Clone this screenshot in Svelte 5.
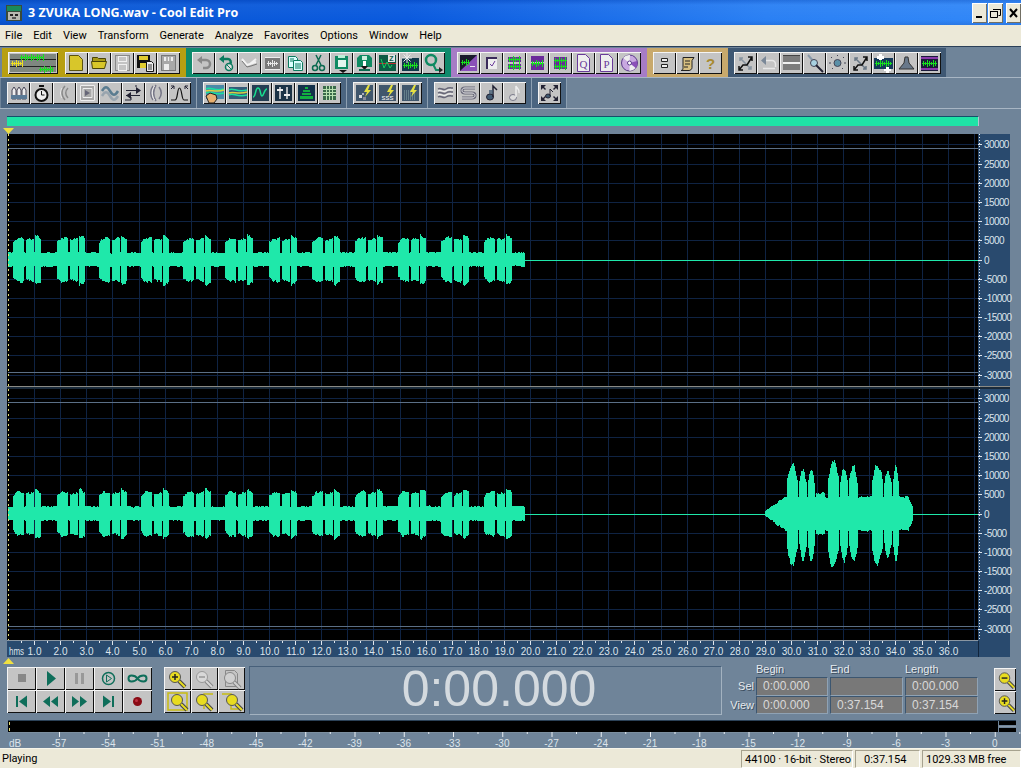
<script>
  // small seeded rng so the waveform is the same on every load
  function rng(seed) {
    let a = seed;
    return () => {
      a = (a + 0x6d2b79f5) | 0;
      let t = Math.imul(a ^ (a >>> 15), 1 | a);
      t = (t + Math.imul(t ^ (t >>> 7), 61 | t)) ^ t;
      return ((t ^ (t >>> 14)) >>> 0) / 4294967296;
    };
  }

  const burstStarts = [13, 57, 99, 141, 183, 225, 269, 312, 355, 398, 441, 484];

  function shortEnv(x) {
    if (x > 524) return 0;
    let amp = 6.5;
    for (const s of burstStarts) {
      const r = x - s;
      if (r >= 0 && r <= 10) amp = 17 + Math.min(r, 4) * 1;
      if (r >= 13 && r <= 20) amp = 19 + (r - 13) * 0.25;
      if (r >= 22 && r <= 27) amp = 24 - (r - 22) * 0.6;
    }
    return amp;
  }

  const longLobes = [
    [787, 797, 49], [799, 806, 43], [808, 814, 46],
    [828, 838, 51], [840, 847, 46], [849, 857, 46],
    [872, 882, 49], [884, 891, 42], [893, 898, 46],
  ];

  function longEnv(x) {
    if (x < 765 || x > 912) return 0;
    let amp = 16;
    if (x < 785) amp = 2 + ((x - 765) / 20) * 14;
    if (x >= 816 && x <= 824) amp = 20;
    if (x > 908) amp = 15 - (x - 908) * 2.2;
    for (const [a, b, h] of longLobes) {
      if (x >= a && x <= b) {
        const t = (x - a) / (b - a);
        amp = h * (0.7 + 0.3 * Math.sin(t * Math.PI));
      }
    }
    return amp;
  }

  // one 1px column per x, whole pixels; the jitter is smoothed so lobes stay solid
  function wavePath(cy, seed, withLong) {
    const r = rng(seed);
    const spans = [[8, 524, shortEnv]];
    if (withLong) spans.push([765, 912, longEnv]);
    let d = '';
    let upper = 0.5;
    let lower = 0.5;
    for (const [from, to, env] of spans) {
      for (let x = from; x <= to; x++) {
        const e = env(x);
        const big = e > 12;
        upper = upper * 0.45 + r() * 0.55;
        lower = lower * 0.45 + r() * 0.55;
        const spread = big ? 0.2 : 0.4;
        const top = Math.round(cy - e * (1 - spread / 2 + upper * spread));
        const bot = Math.round(cy + e * (1 - spread / 2 + lower * spread) * (big ? 1.04 : 1));
        d += `M${x} ${top}h1V${bot + 1}h-1Z`;
      }
    }
    return d;
  }

  const wave1 = wavePath(258, 11, false);
  const wave2 = wavePath(512, 29, true);

  const STEP = 19.17;
  const vLines = Array.from({ length: 37 }, (_, i) => Math.round(8 + 26.1 * (i + 1)) + 0.5);
  const levels = [-6, -5, -4, -3, -2, -1, 0, 1, 2, 3, 4, 5, 6];
  const channels = [259, 513];
  const lvlY = (cy, k) => Math.round(cy + k * STEP - 0.5) + 0.5;

  const seconds = Array.from({ length: 36 }, (_, i) => i + 1);
  const dbMarks = Array.from({ length: 20 }, (_, i) => -57 + i * 3);

  // --- icon bits ---
  const wv = (x, y, w, c) => {
    let s = `<path d="M${x} ${y}.5h${w}" stroke="${c}"/>`;
    for (let i = 1; i < w; i += 2) {
      const h = 1 + ((i * 7) % 3);
      s += `<path d="M${x + i}.5 ${y - h}v${2 * h + 1}" stroke="${c}"/>`;
    }
    return s;
  };
  const box = (x, y, w, h, c) => `<rect x="${x}" y="${y}" width="${w}" height="${h}" fill="${c}"/>`;
  const line = (d, c, sw = 1) => `<path d="${d}" fill="none" stroke="${c}" stroke-width="${sw}"/>`;
  const cross = (a, b) =>
    line('M6 6L17 17M6 9V6h3M14 17h3v-3', b, 1.5) + line('M5 18L9 13l4 0 5-8M14 5h4v4M5 14v4h4', a, 1.5);
  const bolt = `<path d="M15 3L11 10h3l-2 5 6-7h-3l2-5z" fill="#e6e040"/>`;
  const stripes = (c1) =>
    box(5, 5, 13, 5, c1) + box(5, 12, 13, 5, c1) + wv(5, 7, 13, '#18e020') + wv(5, 14, 13, '#18e020');
  const pageMark = (l) =>
    `<path d="M5.500 2.500h8l4 4v13h-12z" fill="#eee" stroke="#6a3a9a"/><text x="11.500" y="16" font-size="11" font-family="Liberation Serif" text-anchor="middle" fill="#6a3a9a">${l}</text>`;
  const mag = (inner = '', cx = 11, cy = 10, c = '#e8dc20') =>
    `<path d="M${cx + 4} ${cy + 4}l6 6" stroke="#444" stroke-width="4"/><path d="M${cx + 4} ${cy + 4}l6 6" stroke="${c}" stroke-width="2"/><circle cx="${cx}" cy="${cy}" r="5.500" fill="${c}" stroke="#555"/>${inner}`;

  const icons = {
    new: `<path d="M4.500 3.500h9l4 4v11h-13z" fill="#d8c62a" stroke="#5a5210"/>`,
    open: `<path d="M4.500 5.500h5l1 1h7v3h-13z" fill="#a89a18" stroke="#4a4408"/><path d="M3.500 9.500h15l-2 7h-12z" fill="#d8c62a" stroke="#4a4408"/>`,
    save: `<rect x="4.500" y="3.500" width="14" height="15" fill="none" stroke="#888"/>` + `<rect x="7.500" y="4.500" width="8" height="5" fill="none" stroke="#f0f0f0"/>` + `<rect x="7.500" y="12.500" width="8" height="6" fill="none" stroke="#f0f0f0"/>`,
    saveas: box(3, 3, 13, 13, '#111') + box(5, 4, 9, 4, '#e0cc30') + box(6, 11, 6, 5, '#e0cc30') + `<path d="M12.500 9.500h5l2 2v8h-7z" fill="#eee" stroke="#111"/>` + line('M14 13h4M14 15h4M14 17h4', '#333'),
    saveall: `<rect x="4.500" y="3.500" width="14" height="15" fill="#a8a8a8" stroke="#777"/>` + box(7, 5, 9, 4, '#eee') + line('M10 5v4M13 5v4', '#777') + box(7, 12, 5, 6, '#eee'),
    undo: line('M7 8h7a3.500 3.500 0 0 1 0 8h-3', '#888', 2.500) + `<path d="M10 4l-5 4 5 4z" fill="#888"/>`,
    repeat: line('M7 7h6a3 3 0 0 1 2 5', '#0b7a5e', 2.500) + `<path d="M9 3L4 7l5 4z" fill="#0b7a5e"/><circle cx="14" cy="15" r="3.500" fill="#ddd" stroke="#0b7a5e" stroke-width="1.500"/>` + line('M12 13l5 5', '#0b7a5e'),
    env: line('M4 7l5 6 3-1 6-5M12 12l6-2', '#f2f2f2', 2) + line('M4 9l5 6 4-1 6-2', '#777', 1),
    trim: box(4, 5, 15, 13, '#7a7a7a') + wv(6, 11, 11, '#e8e8e8') + line('M4 5.500h15M4 17.500h15', '#eee'),
    copy: `<path d="M4.500 4.500h7l2 2v9h-9z" fill="#dff" stroke="#0b7a5e"/><path d="M9.500 8.500h7l2 2v8h-9z" fill="#dff" stroke="#0b7a5e"/>` + line('M6 7h4M6 9h3M11 12h6M11 14h6M11 16h6', '#0b7a5e'),
    cut: line('M9 3l5 10M14 3L9 13', '#0b6a50', 1.500) + `<circle cx="8" cy="16" r="2.500" fill="none" stroke="#0b6a50" stroke-width="1.500"/><circle cx="15" cy="16" r="2.500" fill="none" stroke="#0b6a50" stroke-width="1.500"/>`,
    paste: box(5, 4, 13, 13, '#0f8a62') + box(8, 3, 7, 3, '#bff0d8') + box(8, 8, 8, 7, '#e4f6ee') + `<path d="M9 18l4 3 4-3z" fill="#111"/>`,
    pastemix: `<path d="M7 3h9l3 3v9H4V6z" fill="#0f8a62"/>` + box(9, 4, 5, 4, '#cfeee0') + box(10, 9, 3, 6, '#fff') + `<path d="M8 14h7l-3.500 4z" fill="#111"/>` + box(6, 17, 11, 2, '#0b6a50'),
    snap: box(3, 3, 17, 16, '#0d5a44') + line('M3 11.500h17', '#c03030') + line('M5 7l3 9 3-6 3 6 2-3', '#18d060') + box(12, 3, 7, 7, '#e4e4e4') + `<text x="15.500" y="9" font-size="7" text-anchor="middle" font-family="Liberation Sans" font-weight="700" fill="#0d5a44">Z</text>`,
    spark: box(3, 6, 17, 13, '#12384a') + wv(4, 13, 15, '#18e020') + line('M8 1v10M3 6h10M4.500 2.500l7 7M11.500 2.500l-7 7', '#eee'),
    zoomq: `<circle cx="9" cy="8" r="5" fill="none" stroke="#0f8a62" stroke-width="2.500"/>` + line('M11 12l3 6h5', '#0f8a62', 2) + `<path d="M17 15l4 3-4 3z" fill="#222"/>`,
    morph: box(3, 3, 17, 16, '#1a1a2a') + `<path d="M20 3v16H3z" fill="#8a50b8"/>` + wv(4, 10, 9, '#18e020') + box(13, 14, 5, 1, '#e8e0f0'),
    check: box(6, 5, 11, 12, '#eee') + box(6, 5, 11, 2, '#3a2a5a') + box(6, 5, 2, 12, '#3a2a5a') + line('M10 12l2 2 3-5', '#6a3a9a'),
    s1: stripes('#6a2a9a'),
    s2: box(5, 4, 13, 6, '#6a2a9a') + box(5, 12, 13, 6, '#6a2a9a') + wv(5, 11, 13, '#18e020'),
    s3: box(5, 5, 13, 12, '#6a2a9a') + wv(5, 8, 13, '#18e020') + wv(5, 14, 13, '#18e020'),
    docq: pageMark('Q'),
    docp: pageMark('P'),
    cd: `<circle cx="11.500" cy="11" r="8" fill="#c8a8e0" stroke="#5a3a8a"/><path d="M11.500 11L5 6a8 8 0 0 1 7-3zM11.500 11l6 5a8 8 0 0 1-6 3z" fill="#eee"/><path d="M11.500 11L19 9a8 8 0 0 1-1 7z" fill="#8a50b8"/><circle cx="11.500" cy="11" r="2" fill="#fff" stroke="#5a3a8a"/>`,
    ff: `<path d="M8.500 6.500h6v3h-6zM8.500 12.500h6v3h-6z" fill="#eee" stroke="#222"/>`,
    scroll: `<path d="M7 5.500h11l-2 3v7c0 2-2 3-3 3H5c2 0 2-2 2-3z" fill="#d8c080" stroke="#222"/>` + line('M9 9h5M9 12h5M8 15h4', '#222'),
    help: `<text x="11.500" y="17" font-size="15" font-weight="700" font-family="Liberation Sans" text-anchor="middle" fill="#a88a30">?</text>`,
    x1: cross('#111', '#8894a0'),
    back: line('M6 8.500h9a3.500 3.500 0 0 1 3.500 3.500v3', '#e8e8e8', 1.500) + line('M6 16.500h12', '#e8e8e8', 1.500) + `<path d="M9 4l-5 4.500 5 4.500z" fill="#7a8898"/>`,
    hbar: box(3, 4, 17, 14, '#7c7c7c') + box(3, 10, 17, 2, '#f0f0f0') + box(3, 3, 17, 1, '#444'),
    plug: line('M5 3l6 7', '#8899aa', 2) + `<circle cx="11" cy="11" r="3.500" fill="#a8d0e0" stroke="#445"/>` + line('M13 13l7 7', '#223', 2),
    ball: `<circle cx="11.500" cy="11" r="3.500" fill="#5a90a8" stroke="#445"/>` + `<path d="M11.500 3v1M5 5l1 1M18 5l-1 1M3 11h2M18 11h2M6 17l1-1M17 17l-1-1" stroke="#445"/>`,
    x2: cross('#111', '#6a7886'),
    waveplus: box(2, 6, 19, 11, '#173a5a') + wv(3, 11, 17, '#18e020') + `<path d="M7 2h3v2h2v3h-2v1H7V7H5V4h2zM14 15h3v2h2v2h-2v2h-3v-2h-2v-2h2z" fill="#fff"/>`,
    cone: `<path d="M10 5h3l1 6 5 6H4l5-6z" fill="#68788a" stroke="#333"/>`,
    band: box(3, 4, 17, 15, '#1a1a3a') + box(3, 5, 17, 2, '#8a3aaa') + box(3, 16, 17, 2, '#8a3aaa') + wv(4, 11, 15, '#18e020'),
    tubes: `<path d="M5 8l2-3 2 3v9H5zM10 8l2-3 2 3v9h-4zM15 8l2-3 2 3v9h-4z" fill="#eee" stroke="#445"/>` + box(4, 13, 16, 4, '#5a7a96'),
    watch: `<circle cx="11.500" cy="13" r="6" fill="#eee" stroke="#111" stroke-width="2"/>` + box(9, 3, 5, 2, '#111') + line('M11.500 9v4h3', '#111'),
    arcs: line('M12 4c-4 4-4 10 0 14M15 6c-3 3-3 7 0 10', '#8a8a8a', 1.500) + line('M9 6c-2 3-2 7 0 10', '#e8e8e8', 1),
    spiral: `<rect x="4" y="3" width="15" height="16" fill="#a8a8a8"/>` + line('M4.500 3.500h14v15h-14zM7 6.500h9v9H7z', '#eee') + `<path d="M9 8l5 3-5 3z" fill="#667"/>`,
    wavy: line('M3 9c3-5 5-5 8 0s5 5 8 0', '#5a7c90', 2.500) + line('M3 14c3-5 5-5 8 0s5 5 8 0', '#98a4ae', 2.500),
    arrows: line('M4 8.500h14M4 13.500h14', '#223') + `<path d="M14 5l5 3.500-5 3.500zM9 10l-5 3.500 5 3.500z" fill="#223"/>` + line('M3 18h6v-3M14 5V3', '#223'),
    arcs2: line('M8 4c-3 4-3 10 0 14M11 3c-3 5-3 11 0 16M14 5c3 4 3 8 0 12', '#778', 1.500) + line('M9.500 4c-3 4-3 10 0 14', '#f0f0f0'),
    peak: line('M3 18h4c3 0 2-12 4.500-12s2 12 4.500 12h4', '#111', 1.200) + line('M3 7l3-3M3 4h3v3M20 7l-3-3M20 4h-3v3', '#223'),
    wavehand: box(3, 3, 18, 14, '#4a8aa8') + line('M3 7c4-3 8 3 18 0M3 11c4-3 8 3 18 0', '#18e0a0', 1.500) + line('M3 9c4-2 10 2 18-1', '#d8d040', 1.500) + `<path d="M3 14l4-3 6 2 1 4-3 4H6z" fill="#e8b070" stroke="#222"/>`,
    waves: box(3, 5, 18, 12, '#355a78') + line('M3 8c4-3 8 3 18 0M3 13c4-3 8 3 18 0', '#18e0a0', 1.500) + line('M3 11c4-2 10 2 18-1', '#d8d040', 1.500),
    curve: box(3, 3, 17, 16, '#253d52') + line('M4 15c3 0 2-9 5-9s2 8 4 8 2-7 5-7', '#18e090', 1.500),
    sliders: box(3, 3, 17, 16, '#1c3346') + line('M8 5v12M15 5v12', '#e4e4e4', 1.500) + box(5, 7, 6, 2, '#eee') + box(12, 12, 6, 2, '#eee'),
    spec: box(3, 3, 17, 16, '#12304a') + `<path d="M10 5h3v2h-3zM8 8h7v2H8zM7 11h9v2H7zM5 14h13v3H5z" fill="#12b040"/>`,
    grid: box(5, 4, 13, 14, '#3a6a4a') + line('M5 7.500h13M5 10.500h13M5 13.500h13M8.500 4v14M11.500 4v14M14.500 4v14', '#b8e0b0'),
    zap1: box(3, 3, 17, 16, '#40566c') + box(6, 13, 3, 3, '#ddd') + box(10, 15, 3, 3, '#889') + box(9, 11, 2, 2, '#aab') + bolt,
    zap2: box(3, 3, 17, 16, '#40566c') + `<text x="11.500" y="18" font-size="8" font-family="Liberation Sans" text-anchor="middle" fill="#eee">sss</text>` + bolt,
    zap3: box(3, 3, 17, 16, '#40566c') + `<path d="M5 9h12M5 11h12M5 13h12M5 15h12M5 17h12" stroke="#8aa" stroke-dasharray="1 1"/>` + bolt,
    ripple: line('M4 7c3-2 5 2 8 0s5-1 7-1M4 11c3-2 5 2 8 0s5-1 7-1M4 15c3-2 5 2 8 0s5-1 7-1', '#667', 1.500) + line('M4 9c3-2 5 2 8 0s5-1 7-1M4 13c3-2 5 2 8 0s5-1 7-1', '#f4f4f4'),
    ess: line('M18 6H8c-4 0-4 5 0 5h7c4 0 4 5 0 5H5', '#667', 3) + line('M18 6H8c-4 0-4 5 0 5h7c4 0 4 5 0 5H5', '#eee', 1),
    note: `<ellipse cx="10" cy="15" rx="3.500" ry="3" fill="#405a72" stroke="#223"/>` + line('M13 15V4l4 4', '#223', 1.500) + line('M9 9h4M9 11h4', '#405a72', 1.500),
    noteo: `<ellipse cx="10" cy="15.500" rx="3.500" ry="3" fill="#ddd" stroke="#778"/>` + line('M13 15V4c1 3 4 3 3 7', '#eee', 1.500),
    corners: `<ellipse cx="10" cy="14" rx="2.500" ry="2" fill="#405a72" stroke="#223"/>` + line('M12 14V7l3 3', '#223') + `<path d="M3 3h5l-2 2 2 2-1 1-2-2-2 2zM20 3h-5l2 2-2 2 1 1 2-2 2 2zM3 19h5l-2-2 2-2-1-1-2 2-2-2zM20 19h-5l2-2-2-2 1-1 2 2 2-2z" fill="#223"/>`,
  };

  const toolbar1 = [
    { cls: 'gold', big: true, items: ['new', 'open', 'save', 'saveas', 'saveall'] },
    { cls: 'teal', items: ['undo', 'repeat', 'env', 'trim', 'copy', 'cut', 'paste', 'pastemix', 'snap', 'spark', 'zoomq'] },
    { cls: 'purple', items: ['morph', 'check', 's1', 's2', 's3', 'docq', 'docp', 'cd'] },
    { cls: 'tan', items: ['ff', 'scroll', 'help'] },
    { cls: 'slate', items: ['x1', 'back', 'hbar', 'plug', 'ball', 'x2', 'waveplus', 'cone', 'band'] },
  ];
  const toolbar2 = [
    ['tubes', 'watch', 'arcs', 'spiral', 'wavy', 'arrows', 'arcs2', 'peak'],
    ['wavehand', 'waves', 'curve', 'sliders', 'spec', 'grid'],
    ['zap1', 'zap2', 'zap3'],
    ['ripple', 'ess', 'note', 'noteo'],
    ['corners'],
  ];

  const T = '#0f6e5a';
  const transport = [
    box(11, 7, 8, 8, '#888'),
    `<path d="M11 4l9 7.500-9 7.500z" fill="${T}"/>`,
    box(10, 6, 3, 11, '#999') + box(16, 6, 3, 11, '#999'),
    `<circle cx="14.500" cy="11.500" r="6" fill="none" stroke="${T}" stroke-width="1.500"/><path d="M12.500 8l5 3.500-5 3.500z" fill="none" stroke="${T}"/>`,
    line('M14.500 11.500c-2-3-4-3-6-3s-3 1.500-3 3 1 3 3 3 4 0 6-3 4-3 6-3 3 1.500 3 3-1 3-3 3-4 0-6-3', T, 2),
    box(9, 6, 2, 11, T) + `<path d="M20 5.500v12l-8-6z" fill="${T}"/>`,
    `<path d="M14 6v11l-7-5.500zM22 6v11l-7-5.500z" fill="${T}"/>`,
    `<path d="M7 6v11l7-5.500zM15 6v11l7-5.500z" fill="${T}"/>`,
    box(18, 6, 2, 11, T) + `<path d="M9 5.500v12l8-6z" fill="${T}"/>`,
    `<circle cx="14.500" cy="11.500" r="4.500" fill="#8a0a14"/><circle cx="13.500" cy="10.500" r="1.500" fill="#c03040"/>`,
  ];

  const plus = line('M8 10h6M11 7v6', '#222', 1.500);
  const minus = line('M8 10h6', '#222', 1.500);
  const zoomBtns = [
    mag(plus),
    mag(line('M8 10h6', '#999', 1.500), 11, 10, '#d8d8d8').replace(/#555/g, '#999').replace(/#444/g, '#888'),
    `<path d="M7.500 3.500h9l3 3v13h-12z" fill="none" stroke="#888"/>` + mag('', 12, 11, '#d0d0d0').replace(/#555/g, '#888').replace(/#444/g, '#888'),
    `<rect x="4" y="3" width="19" height="17" fill="none" stroke="#c8bc10" stroke-width="1.500"/>` + mag('', 13, 10),
    line('M22 4H13v15', '#c8bc10', 1.500) + mag('', 11, 10),
    line('M4 4h9v15h8', '#c8bc10', 1.500) + mag('', 14, 10),
  ];

  const menu = ['File', 'Edit', 'View', 'Transform', 'Generate', 'Analyze', 'Favorites', 'Options', 'Window', 'Help'];
  const lvl = (k) => (k === 0 ? '0' : String(k * -5000));
</script>

<div class="app">
  <header class="titlebar">
    <svg class="appicon" width="16" height="16" viewBox="0 0 16 16">
      <rect width="16" height="16" fill="#3a4a3a" />
      <rect x="1" y="1" width="14" height="5" fill="#1a8a5a" />
      <rect x="2" y="7" width="12" height="8" fill="#b8b8b0" />
      <rect x="4" y="9" width="3" height="2" fill="#222" />
      <rect x="9" y="9" width="3" height="2" fill="#222" />
      <rect x="6" y="12" width="4" height="2" fill="#555" />
    </svg>
    <span class="title">3 ZVUKA LONG.wav - Cool Edit Pro</span>
    <div class="winbtns">
      <div class="winbtn"><svg width="13" height="12"><rect x="3" y="9" width="6" height="2" fill="#000" /></svg></div>
      <div class="winbtn"><svg width="13" height="12"><path d="M4.500 2.500h7v6h-2M1.500 4.500h7v6h-7z" fill="none" stroke="#000" /><path d="M4 2.500h8M1 4.500h8" stroke="#000" /></svg></div>
      <div class="winbtn close"><svg width="13" height="12"><path d="M3 2l7 8M10 2l-7 8" stroke="#000" stroke-width="2" /></svg></div>
    </div>
  </header>

  <nav class="menubar">
    {#each menu as item}
      <span>{item}</span>
    {/each}
  </nav>

  <div class="row row1">
    {#each toolbar1 as group}
      <div class={`group ${group.cls}`}>
        {#if group.big}
          <div class="btn bigbtn">
            <svg width="50" height="22" viewBox="0 0 50 22">
              <rect x="2" y="2" width="46" height="18" fill="#7f8780" />
              <path d="M2 7.500h46M2 14.500h46" stroke="#222" />
              {@html wv(12, 5, 24, '#18e020')}
              {@html wv(3, 11, 12, '#f0e020')}
              {@html wv(31, 17, 14, '#18e020')}
            </svg>
          </div>
        {/if}
        {#each group.items as name}
          <div class="btn"><svg width="23" height="22" viewBox="0 0 23 22">{@html icons[name]}</svg></div>
        {/each}
      </div>
    {/each}
  </div>

  <div class="row row2">
    {#each toolbar2 as group}
      <div class="group dim">
        {#each group as name}
          <div class="btn"><svg width="23" height="22" viewBox="0 0 23 22">{@html icons[name]}</svg></div>
        {/each}
      </div>
    {/each}
  </div>

  <div class="overview">
    <div class="overview-bar"></div>
    <svg class="marker" width="11" height="6"><path d="M0 0h11L5.500 6z" fill="#f0e040" /></svg>
  </div>

  <svg class="display" width="1021" height="523" viewBox="0 133 1021 523">
    <rect x="0" y="133" width="1021" height="523" fill="#6f8499" />
    <rect x="7" y="133" width="971" height="507" fill="#000" />
    <rect x="978" y="133" width="32" height="523" fill="#294a6e" />
    <rect x="7" y="640" width="971" height="16" fill="#294a6e" />

    {#each vLines as x}
      {#if x < 978}
        <path d="M{x} 133V385M{x} 388V640" stroke="#0f2343" />
      {/if}
    {/each}
    {#each channels as cy}
      {#each levels as k}
        <path d="M8 {lvlY(cy, k)}H978" stroke="#0f2343" />
        <path d="M978 {lvlY(cy, k)}h4" stroke="#dfe6ee" />
        <text class="lvl" x="984" y={lvlY(cy, k) + 3}>{lvl(k)}</text>
      {/each}
      <path d="M8 {cy - 111.500}H978M8 {cy + 112.500}H978" stroke="#5b6f86" />
      <path d="M524 {cy + 0.500}H978" stroke="#1fe8aa" />
    {/each}

    <path d={wave1} fill="#1fe8aa" />
    <path d={wave2} fill="#1fe8aa" />

    <rect x="7" y="385" width="1003" height="1" fill="#8a8a84" />
    <rect x="7" y="386" width="1003" height="2" fill="#1a2a3a" />
    <path d="M8.500 133V640" stroke="#e8e070" stroke-dasharray="2 3" />
    <path d="M979.500 133V640" stroke="#e8edf2" stroke-dasharray="1 2" />

    <rect x="7" y="639" width="971" height="1" fill="#8a96a2" />
    <text class="rul" x="9" y="654" textLength="15" lengthAdjust="spacingAndGlyphs">hms</text>
    {#each seconds as s, i}
      <path d="M{vLines[i]} 640v4" stroke="#dfe6ee" />
      <path d="M{vLines[i] - 13} 640v2" stroke="#dfe6ee" />
      <text class="rul" x={vLines[i]} y="654" text-anchor="middle">{s}.0</text>
    {/each}
    <path d="M978.500 640V656" stroke="#10243c" />
  </svg>

  <section class="bottom">
    <svg class="marker low" width="11" height="6"><path d="M5.500 0L11 6H0z" fill="#f0e040" /></svg>
    <div class="controls">
      <div class="transport">
        {#each transport as icon}
          <div class="btn wide"><svg width="29" height="23" viewBox="0 0 29 23">{@html icon}</svg></div>
        {/each}
      </div>
      <div class="zooms">
        {#each zoomBtns as icon}
          <div class="btn mid"><svg width="27" height="23" viewBox="0 0 27 23">{@html icon}</svg></div>
        {/each}
      </div>
      <div class="clock">0:00.000</div>
      <div class="selinfo">
        <span></span><span class="head">Begin</span><span class="head">End</span><span class="head">Length</span>
        <span class="rowlabel">Sel</span><span class="field">0:00.000</span><span class="field"></span><span class="field">0:00.000</span>
        <span class="rowlabel">View</span><span class="field">0:00.000</span><span class="field">0:37.154</span><span class="field">0:37.154</span>
      </div>
      <div class="sidezoom">
        <div class="btn side"><svg width="22" height="23" viewBox="0 0 23 23">{@html mag(minus)}</svg></div>
        <div class="btn side"><svg width="22" height="23" viewBox="0 0 23 23">{@html mag(plus)}</svg></div>
      </div>
    </div>

    <div class="meter">
      <div class="meter-bar"><i></i></div>
      <div class="meter-end"></div>
    </div>
    <svg class="dbscale" width="1021" height="17" viewBox="0 730 1021 17">
      <path d="M8 730h987" stroke="#8a9aa8" />
      {#each dbMarks as db, i}
        <path d="M{59.500 + i * 49.250} 730v5" stroke="#e8edf2" />
        <path d="M{84 + i * 49.250} 730v2" stroke="#e8edf2" />
        <text x={59 + i * 49.250} y="744.500" text-anchor="middle">{db}</text>
      {/each}
      <text x="15" y="744.500" text-anchor="middle">dB</text>
    </svg>
  </section>

  <footer class="status">
    <span class="state">Playing</span>
    <span class="cell c1">44100 · 16-bit · Stereo</span>
    <span class="cell c2">0:37.154</span>
    <span class="cell c3">1029.33 MB free</span>
  </footer>
</div>

<style>
  :global(body) {
    margin: 0;
    background: #6f8499;
  }

  .app {
    width: 1021px;
    height: 768px;
    overflow: hidden;
    display: flex;
    flex-direction: column;
    font-family: Roboto, 'Liberation Sans', sans-serif;
    font-size: 11px;
    color: #000;
    background: #6f8499;
  }

  svg {
    display: block;
  }

  .titlebar {
    height: 25px;
    flex: none;
    display: flex;
    align-items: center;
    padding-left: 6px;
    box-sizing: border-box;
    background:
      linear-gradient(180deg, rgba(0, 30, 120, 0.18), rgba(255, 255, 255, 0.04) 20%, rgba(0, 0, 0, 0) 80%, rgba(0, 20, 90, 0.12)),
      linear-gradient(90deg, #0a58d4, #0a5ade 40%, #2a80f4 75%, #3288f8);
  }

  .title {
    margin-left: 6px;
    color: #fff;
    font-family: 'Open Sans', 'Noto Sans', sans-serif;
    font-weight: 700;
    font-size: 12.5px;
    white-space: nowrap;
  }

  .winbtns {
    margin-left: auto;
    display: flex;
    gap: 1px;
    align-items: center;
  }

  .winbtn {
    width: 15px;
    height: 20px;
    display: flex;
    align-items: center;
    justify-content: center;
    background: #ece9d8;
    box-shadow: inset 1px 1px 0 #fff, inset -1px -1px 0 #716f64;
  }

  .winbtn.close {
    margin-left: 2px;
  }

  .menubar {
    height: 21px;
    flex: none;
    display: flex;
    align-items: center;
    gap: 11px;
    padding-left: 5px;
    background: #ece9d8;
    font-size: 11px;
  }

  .row {
    flex: none;
    display: flex;
    box-sizing: border-box;
  }

  .row1 {
    height: 32px;
    padding: 1px 0 0 2px;
    border-top: 1px solid #2b4058;
    border-bottom: 1px solid #a8b6c4;
    margin-bottom: 0;
  }

  .row2 {
    height: 31px;
    padding-left: 1px;
    border-bottom: 1px solid #a8b6c4;
  }

  .group {
    display: flex;
    align-items: center;
    padding: 0 6px;
    box-sizing: border-box;
  }

  .gold { background: #b79f12; }
  .teal { background: #0f8a6c; }
  .purple { background: #a67cc6; }
  .tan { background: #c8a96c; }
  .slate { background: #3f5873; width: 218px; }

  .dim {
    background: #4b6580;
    border-right: 1px solid #8da0b2;
    padding-right: 5px;
    padding-bottom: 1px;
  }

  .btn {
    width: 23px;
    height: 22px;
    flex: none;
    background: #c4c4c4;
    box-shadow: inset 1px 1px 0 #f4f4f4, inset -1px -1px 0 #111;
  }

  .bigbtn {
    width: 50px;
    margin: 0 7px 0 0;
  }

  .wide { width: 29px; height: 23px; }
  .mid { width: 27px; height: 23px; }
  .side { width: 22px; height: 23px; }

  .overview {
    position: relative;
    height: 25px;
    flex: none;
    box-sizing: border-box;
    padding: 7px 42px 0 7px;
  }

  .overview-bar {
    height: 10px;
    background: #1fe3a6;
    border-top: 1px solid #14506a;
    box-sizing: border-box;
    border-right: 1px solid #b8c4ce;
  }

  .marker {
    position: absolute;
    left: 3px;
    top: 19px;
  }

  .marker.low {
    top: 1px;
  }

  .display {
    flex: none;
  }

  .display text {
    font-family: 'Liberation Sans', sans-serif;
    fill: #dde4ec;
  }

  .lvl {
    font-size: 10px;
    letter-spacing: -0.6px;
  }

  .rul {
    font-size: 10px;
  }

  .bottom {
    position: relative;
    flex: none;
    height: 91px;
    box-sizing: border-box;
    padding-top: 10px;
  }

  .controls {
    display: flex;
    padding-left: 7px;
    height: 47px;
  }

  .transport {
    display: grid;
    grid-template-columns: repeat(5, 29px);
    grid-auto-rows: 23px;
  }

  .zooms {
    margin-left: 12px;
    display: grid;
    grid-template-columns: repeat(3, 27px);
    grid-auto-rows: 23px;
  }

  .clock {
    margin: -1px 0 -1px 4px;
    width: 473px;
    height: 49px;
    box-sizing: border-box;
    padding-left: 27px;
    border: 1px solid #a3b2c0;
    border-top-color: #47607a;
    border-left-color: #47607a;
    background: #6f8499;
    color: #d4dadf;
    font-family: 'Liberation Sans', sans-serif;
    font-size: 50px;
    line-height: 44px;
    text-align: center;
  }

  .selinfo {
    width: 256px;
    margin-top: -2px;
    display: grid;
    grid-template-columns: 30px 72px 73px 73px;
    grid-template-rows: 12px 19px 18px;
    column-gap: 2px;
    margin-left: 2px;
    font-family: 'Liberation Sans', sans-serif;
    font-size: 11px;
    color: #e6eaee;
    text-shadow: 1px 1px 0 #3c4e60;
  }

  .head {
    margin-top: -2px;
    line-height: 12px;
  }

  .rowlabel {
    text-align: right;
    line-height: 19px;
    padding-right: 0;
  }

  .field {
    box-sizing: border-box;
    background: #787878;
    border: 1px solid #5d7792;
    border-color: #3c5670 #8fa2b4 #8fa2b4 #3c5670;
    color: #d8d8d8;
    text-shadow: none;
    font-size: 12px;
    line-height: 17px;
    padding-left: 6px;
  }

  .sidezoom {
    margin-left: 14px;
    margin-top: 1px;
  }

  .meter {
    display: flex;
    margin: 6px 5px 0 8px;
    height: 12px;
    border-top: 1px solid #2c4258;
    box-sizing: border-box;
  }

  .meter-bar {
    width: 990px;
    background: #000;
    position: relative;
  }

  .meter-bar i {
    position: absolute;
    left: 1px;
    top: 1px;
    height: 9px;
    border-left: 1px dashed #e8e070;
  }

  .meter-end {
    flex: 1;
    border-top: 4px solid #000;
    border-bottom: 4px solid #000;
    background-color: #8a98a6;
    background-clip: content-box;
    height: 11px;
    box-sizing: border-box;
    padding: 1px 0;
    margin-left: 1px;
  }

  .dbscale text {
    font-family: 'Liberation Sans', sans-serif;
    font-size: 10px;
    fill: #dde4ec;
  }

  .status {
    flex: 1;
    position: relative;
    display: flex;
    align-items: center;
    background: #ece9d8;
    font-size: 11px;
    letter-spacing: -0.05px;
    padding-left: 2px;
    border-top: 1px solid #f6f4ea;
    box-sizing: border-box;
  }

  .state {
    width: 739px;
  }

  .cell {
    box-sizing: border-box;
    height: 18px;
    line-height: 17px;
    border: 1px solid #fff;
    border-color: #a6a28f #fff #fff #a6a28f;
    padding-left: 3px;
    white-space: nowrap;
    margin-right: 2px;
  }

  .c1 { width: 112px; }
  .c2 { width: 65px; padding-left: 8px; }
  .c3 { width: 99px; margin-right: 0; }
</style>
